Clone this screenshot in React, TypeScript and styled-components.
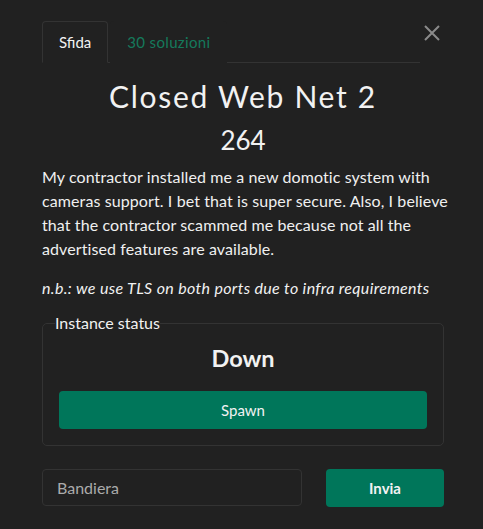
import React from "react";
import styled, { createGlobalStyle } from "styled-components";

const Global = createGlobalStyle`
  html, body { margin: 0; padding: 0; background: #212121; }
  body { font-family: Lato, "Noto Sans", sans-serif; color: #f2f2f2; }
  * { box-sizing: border-box; }
`;

const Modal = styled.div`
  width: 483px;
  height: 529px;
  padding: 21px 39px 0 42px;
  background: #212121;
`;

const Header = styled.div`
  display: flex;
  align-items: flex-start;
`;

const Tabs = styled.div`
  flex: 1;
  display: flex;
  border-bottom: 1px solid #333;
  height: 42px;
`;

const Tab = styled.div<{ $active?: boolean }>`
  height: 42px;
  padding: 0 16px;
  display: flex;
  align-items: center;
  font-size: 15px;
  color: ${(p) => (p.$active ? "#f2f2f2" : "#157a5c")};
  letter-spacing: ${(p) => (p.$active ? "0" : "0.35px")};
  margin-left: ${(p) => (p.$active ? "0" : "2px")};
  border: 1px solid ${(p) => (p.$active ? "#333" : "transparent")};
  border-bottom: 1px solid ${(p) => (p.$active ? "#212121" : "transparent")};
  border-radius: 4px 4px 0 0;
  margin-bottom: -1px;
  background: #212121;
`;

const Close = styled.button`
  width: 24px;
  height: 24px;
  margin: 0;
  padding: 0;
  border: none;
  background: transparent;
  display: flex;
  align-items: center;
  justify-content: center;
  color: #8a8a8a;
`;

const Title = styled.h1`
  margin: 15px 0 0;
  text-align: center;
  font-weight: 400;
  font-size: 30px;
  line-height: 36px;
  letter-spacing: 1.7px;
`;

const Points = styled.div`
  text-align: center;
  font-size: 26px;
  line-height: 34px;
  margin-top: 9px;
`;

const Description = styled.p`
  margin: 8px -4px 0 0;
  font-size: 16px;
  line-height: 24px;
  letter-spacing: 0.1px;
  color: #f0f0f0;
`;

const Note = styled.p`
  margin: 15px 0 0;
  font-size: 16px;
  line-height: 24px;
  letter-spacing: 0.34px;
  font-style: italic;
`;

const Fieldset = styled.fieldset`
  margin: 14px 0 0;
  padding: 11px 16px 16px;
  border: 1px solid #333;
  border-radius: 5px;
  display: flex;
  flex-direction: column;
  align-items: stretch;
`;

const Legend = styled.legend`
  padding: 0;
  margin-left: -4px;
  font-size: 16px;
  line-height: 18px;
  color: #f2f2f2;
`;

const Status = styled.div`
  text-align: center;
  font-size: 23.5px;
  font-weight: 700;
  line-height: 30px;
`;

const GreenButton = styled.button<{ $w?: string }>`
  border: none;
  border-radius: 4px;
  background: #00765a;
  color: #f2f2f2;
  font-family: Lato, "Noto Sans", sans-serif;
  font-size: 15px;
  height: 38px;
  width: ${(p) => p.$w || "100%"};
`;

const SpawnButton = styled(GreenButton)`
  margin-top: 18px;
`;

const FlagRow = styled.form`
  display: flex;
  justify-content: space-between;
  margin-top: 23px;
`;

const Input = styled.input`
  width: 260px;
  height: 37px;
  border: 1px solid #333;
  border-radius: 4px;
  background: #212121;
  padding: 0 14px;
  font-family: Lato, "Noto Sans", sans-serif;
  font-size: 16px;
  color: #f2f2f2;
  &::placeholder { color: #ababab; }
`;

const SubmitButton = styled(GreenButton)`
  font-weight: 700;
`;

export default function App() {
  return (
    <>
      <Global />
      <Modal>
        <Header>
          <Tabs>
            <Tab $active>Sfida</Tab>
            <Tab>30 soluzioni</Tab>
          </Tabs>
          <Close aria-label="close">
            <svg width="18" height="18" viewBox="0 0 18 18">
              <path d="M2 2 L16 16 M16 2 L2 16" stroke="currentColor" strokeWidth="2" />
            </svg>
          </Close>
        </Header>
        <Title>Closed Web Net 2</Title>
        <Points>264</Points>
        <Description>
          My contractor installed me a new domotic system with cameras support. I bet that is super secure. Also, I believe that the contractor scammed me because not all the advertised features are available.
        </Description>
        <Note>n.b.: we use TLS on both ports due to infra requirements</Note>
        <Fieldset>
          <Legend>Instance status</Legend>
          <Status>Down</Status>
          <SpawnButton type="button">Spawn</SpawnButton>
        </Fieldset>
        <FlagRow onSubmit={(e) => e.preventDefault()}>
          <Input placeholder="Bandiera" />
          <SubmitButton $w="118px" type="submit">Invia</SubmitButton>
        </FlagRow>
      </Modal>
    </>
  );
}
